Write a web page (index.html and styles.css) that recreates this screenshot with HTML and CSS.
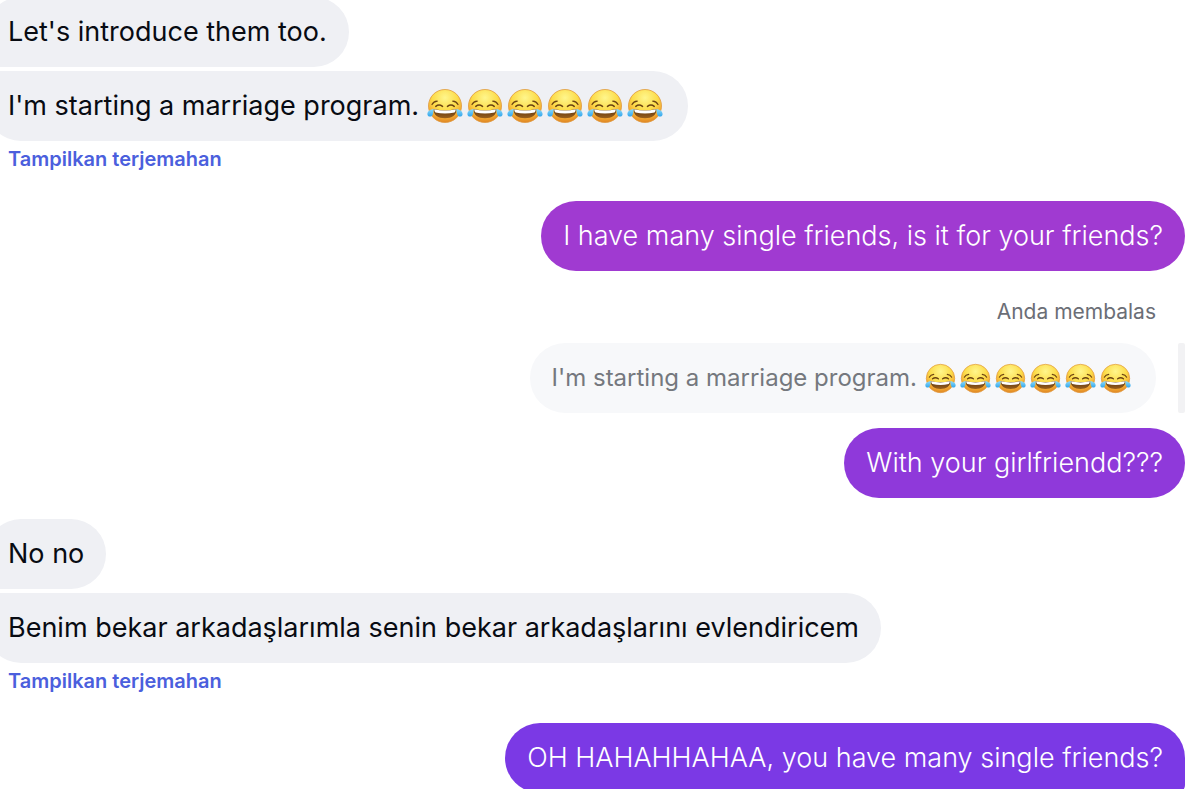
FILE: index.html
```html
<!DOCTYPE html>
<html lang="id">
<head>
<meta charset="utf-8">
<meta name="viewport" content="width=device-width, initial-scale=1">
<title>Chat</title>
<link rel="stylesheet" href="styles.css">
</head>
<body>
<svg class="defs" aria-hidden="true">
  <defs>
    <radialGradient id="face" cx="50%" cy="25%" r="76%">
      <stop offset="0" stop-color="#fff68c"/>
      <stop offset="0.5" stop-color="#fcdc4a"/>
      <stop offset="0.8" stop-color="#f3a931"/>
      <stop offset="1" stop-color="#dd8222"/>
    </radialGradient>
    <linearGradient id="mouth" x1="0" y1="0" x2="0" y2="1">
      <stop offset="0" stop-color="#5a3210"/>
      <stop offset="1" stop-color="#9a601c"/>
    </linearGradient>
    <linearGradient id="tear" x1="0" y1="0" x2="0" y2="1">
      <stop offset="0" stop-color="#8fdcfb"/>
      <stop offset="1" stop-color="#31a5ec"/>
    </linearGradient>
    <symbol id="joy" viewBox="0 0 36 36">
      <circle cx="18" cy="18" r="16.5" fill="url(#face)" stroke="#e0983c" stroke-width="0.8"/>
      <path d="M6.500 21Q18 23.800 29.500 21C29.500 27.200 25 30.200 18 30.200S6.500 27.200 6.500 21Z" fill="url(#mouth)"/>
      <path d="M7.200 21.200Q18 23.800 28.800 21.200Q28.800 23.400 27.500 24.500Q18 26.700 8.500 24.500Q7.200 23.400 7.200 21.200Z" fill="#fff"/>
      <g fill="none" stroke="#6b4312" stroke-linecap="round" stroke-linejoin="round">
        <path d="M8.800 18.300Q12 15.800 15.500 18.300" stroke-width="1.600"/>
        <path d="M20.500 18.300Q24 15.800 27.200 18.300" stroke-width="1.600"/>
        <path d="M5 16.500Q6.500 13.500 10.200 13.200" stroke-width="1.200"/>
        <path d="M31 16.500Q29.500 13.500 25.800 13.200" stroke-width="1.200"/>
      </g>
      <path d="M6.800 21C3.500 21.400 0.300 23.200 0.400 26.200C0.600 29.400 4.800 29.300 5.800 26.400C6.400 24.600 6.500 22.500 6.800 21Z" fill="url(#tear)"/>
      <path d="M29.200 21C32.500 21.400 35.700 23.200 35.600 26.200C35.400 29.400 31.200 29.300 30.200 26.400C29.600 24.600 29.500 22.500 29.200 21Z" fill="url(#tear)"/>
    </symbol>
  </defs>
</svg>
<main class="thread">
  <section class="group received">
    <p class="bubble">Let's introduce them too.</p>
    <p class="bubble">I'm starting a marriage program.
      <span class="emojis" role="img" aria-label="Face with tears of joy, six times"><svg><use href="#joy"/></svg><svg><use href="#joy"/></svg><svg><use href="#joy"/></svg><svg><use href="#joy"/></svg><svg><use href="#joy"/></svg><svg><use href="#joy"/></svg></span>
    </p>
    <a class="translate" href="#">Tampilkan terjemahan</a>
  </section>
  <section class="group sent">
    <p class="bubble orchid">I have many single friends, is it for your friends?</p>
  </section>
  <section class="group sent reply">
    <p class="note">Anda membalas</p>
    <blockquote class="quote">
      <p class="bubble quoted">I'm starting a marriage program.
        <span class="emojis" role="img" aria-label="Face with tears of joy, six times"><svg><use href="#joy"/></svg><svg><use href="#joy"/></svg><svg><use href="#joy"/></svg><svg><use href="#joy"/></svg><svg><use href="#joy"/></svg><svg><use href="#joy"/></svg></span>
      </p>
    </blockquote>
    <p class="bubble purple">With your girlfriendd???</p>
  </section>
  <section class="group received">
    <p class="bubble">No no</p>
    <p class="bubble">Benim bekar arkadaşlarımla senin bekar arkadaşlarını evlendiricem</p>
    <a class="translate" href="#">Tampilkan terjemahan</a>
  </section>
  <section class="group sent">
    <p class="bubble violet">OH HAHAHHAHAA, you have many single friends?</p>
  </section>
</main>
</body>
</html>
```
FILE: styles.css
```css
* {
  box-sizing: border-box;
}

body {
  margin: 0;
  height: 100vh;
  overflow: hidden;
  background: #fff;
  color: #080b12;
  font-family: Inter, "Noto Sans", sans-serif;
}

p,
blockquote {
  margin: 0;
}

.defs {
  display: block;
  width: 0;
  height: 0;
}

/* The thread is scrolled, so its first and last bubbles are cut by the window. */
.thread {
  display: flex;
  flex-direction: column;
  gap: 21px;
  margin: -3px 14px 0 -14px;
}

.group {
  display: flex;
  flex-direction: column;
  gap: 4px;
}

.received {
  align-items: flex-start;
}

.sent {
  align-items: flex-end;
}

.bubble {
  display: flex;
  align-items: center;
  gap: 8px;
  min-height: 70px;
  padding: 17px 22px;
  border-radius: 35px;
  background: #eff0f4;
  font-size: 27px;
  font-weight: 380;
  line-height: 34px;
}

.received .bubble:first-child {
  border-bottom-left-radius: 8px;
}

.received .bubble:nth-child(2) {
  border-top-left-radius: 8px;
}

.sent .bubble {
  color: #fff;
  font-weight: 340;
}

.sent .orchid {
  background: #a03ad1;
}

.sent .purple {
  background: #8f39da;
}

.sent .violet {
  border-bottom-right-radius: 8px;
  background: #7b39e5;
}

.emojis {
  display: flex;
  gap: 4px;
  padding-right: 3px;
}

.emojis svg {
  width: 36px;
  height: 36px;
}

.translate {
  padding: 1px 22px 8px;
  color: #4b5fdd;
  font-size: 20px;
  font-weight: 600;
  line-height: 26px;
  text-decoration: none;
}

.reply {
  gap: 15px;
}

.note {
  padding: 6px 29px 2px;
  color: #6b6e76;
  font-size: 21px;
  line-height: 28px;
}

.quote {
  position: relative;
  padding-right: 29px;
}

.quote::after {
  position: absolute;
  inset: 0 0 0 auto;
  width: 7px;
  border-radius: 2px;
  background: #f2f2f4;
  content: "";
}

.sent .quoted {
  background: #f7f8fa;
  color: #75787e;
  font-size: 24px;
  font-weight: 380;
}

.quoted .emojis svg {
  width: 31px;
  height: 31px;
}
```
